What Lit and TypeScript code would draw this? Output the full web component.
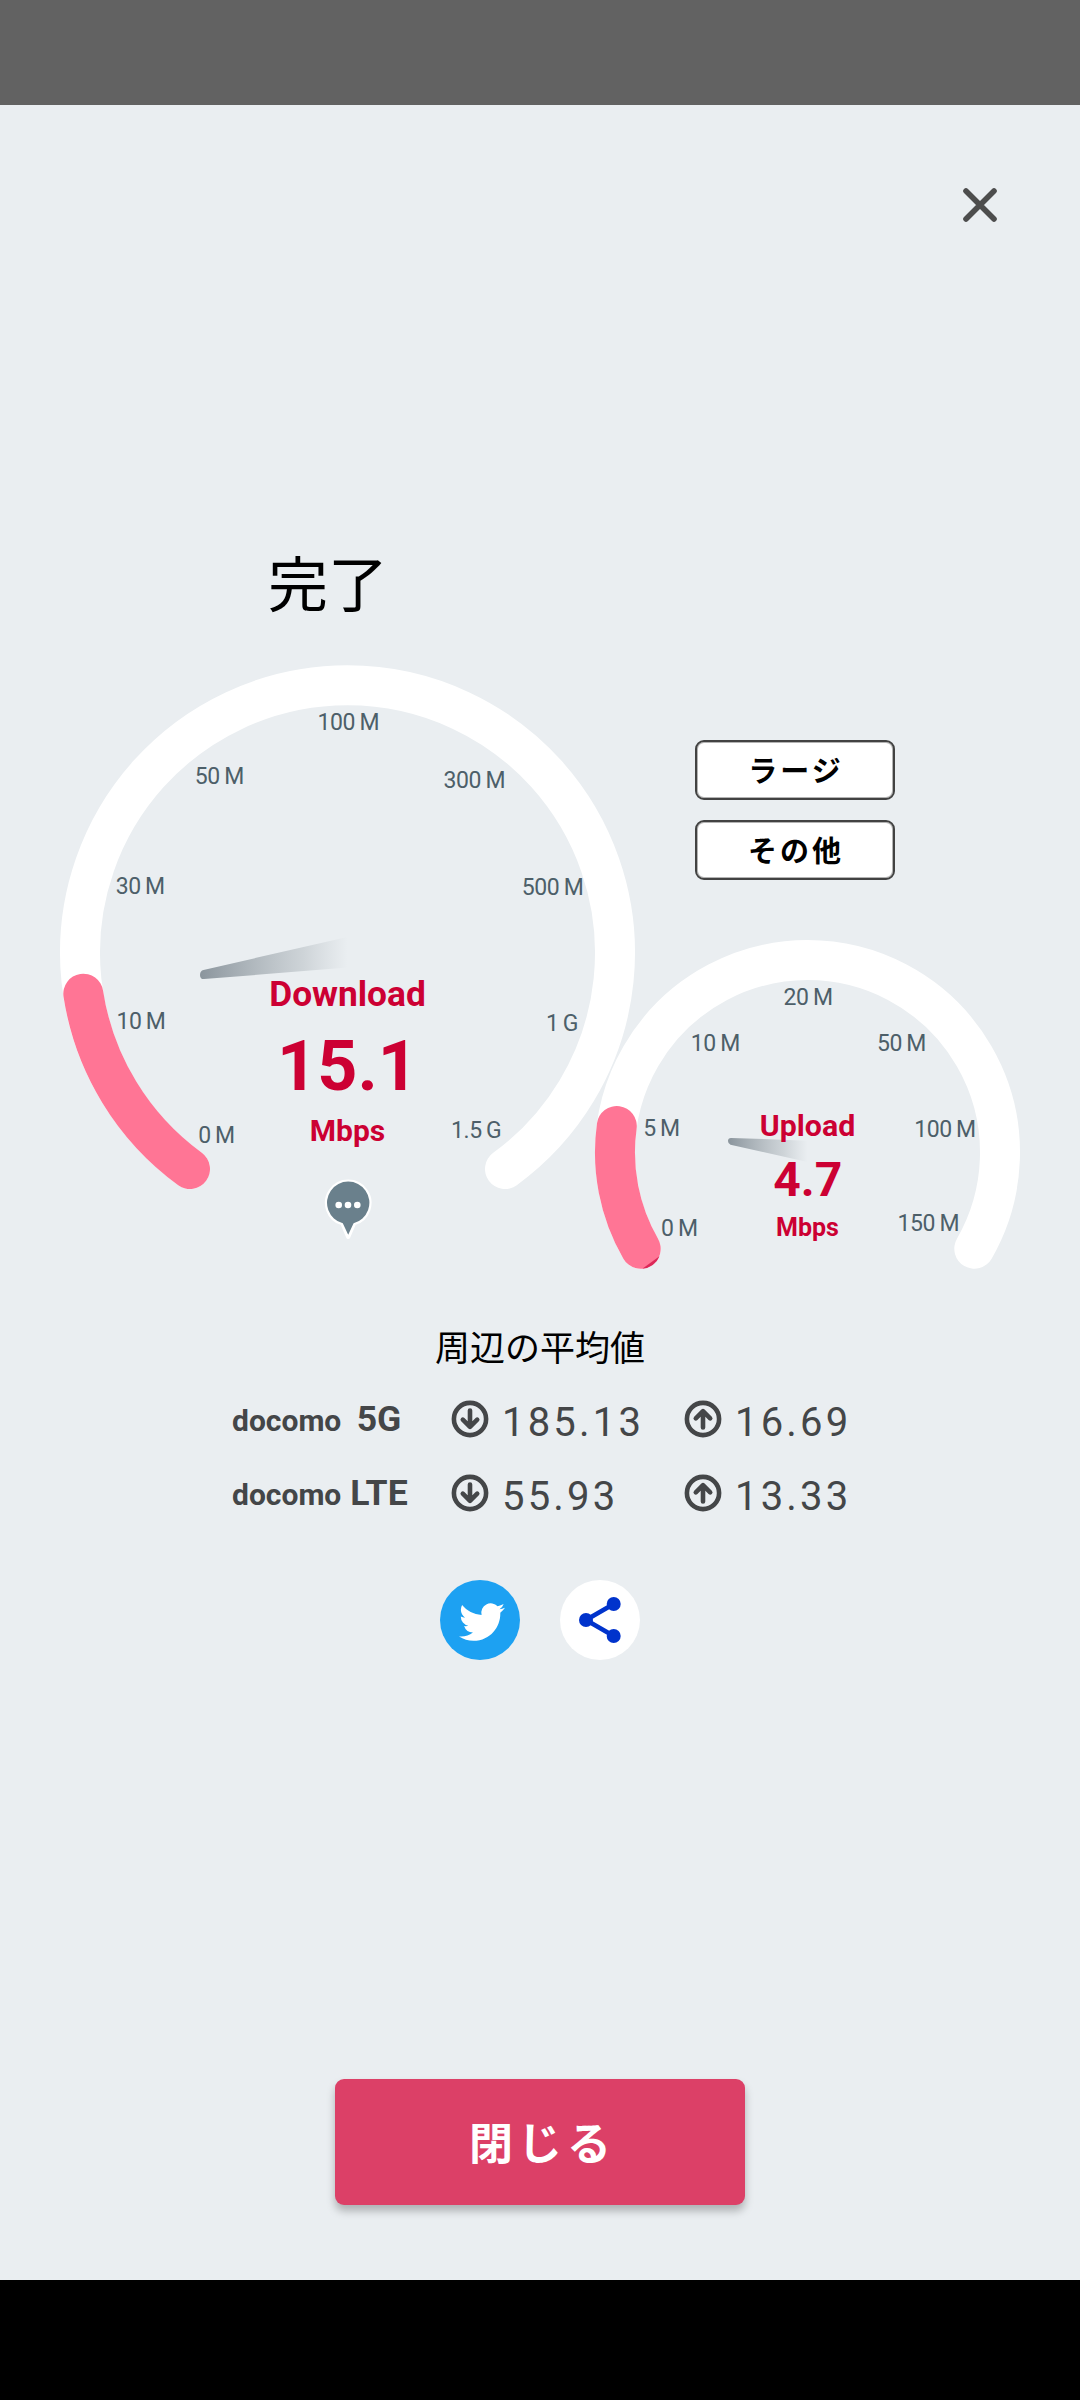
import { LitElement, html, svg, css } from "lit";
import { customElement, property } from "lit/decorators.js";

interface Tick {
  text: string;
  x: number;
  y: number;
}

interface Caption {
  text: string;
  x: number;
  y: number;
  size: number;
}

interface Dial {
  width: number;
  height: number;
  radius: number;
  start: [number, number];
  value: [number, number];
  needle: string;
  needleLength: number;
  ticks: Tick[];
  captions: Caption[];
  restMark?: string;
}

const DOWNLOAD: Dial = {
  width: 575,
  height: 580,
  radius: 267.5,
  start: [-157.5, 216.5],
  value: [-264.2, 41.2],
  needle: "M-144 17.4 L0 -15.5 V15 L-143.5 26.6 Q-147.5 26.6 -147.5 22.4 Q-147.5 18.2 -144 17.4Z",
  needleLength: 147,
  ticks: [
    { text: "0 M", x: -131, y: 190.2 },
    { text: "10 M", x: -206.5, y: 76.5 },
    { text: "30 M", x: -207.3, y: -58.5 },
    { text: "50 M", x: -128.2, y: -168.5 },
    { text: "100 M", x: 0.8, y: -222.5 },
    { text: "300 M", x: 126.8, y: -164.8 },
    { text: "500 M", x: 205.1, y: -57.5 },
    { text: "1 G", x: 214.6, y: 78.2 },
    { text: "1.5 G", x: 128.7, y: 185.5 },
  ],
  captions: [
    { text: "Download", x: 0, y: 53.5, size: 35.3 },
    { text: "15.1", x: 0, y: 137.5, size: 70 },
    { text: "Mbps", x: 0, y: 188.5, size: 30 },
  ],
};

const UPLOAD: Dial = {
  width: 425,
  height: 340,
  radius: 192.5,
  start: [-166.8, 96.2],
  value: [-190.7, -26.5],
  needle: "M-76.5 -14.6 L0 -11.8 V9.6 L-77 -7.8 Q-79.5 -8.6 -79.5 -11.4 Q-79.5 -14.6 -76.5 -14.6Z",
  needleLength: 79,
  ticks: [
    { text: "0 M", x: -128.2, y: 83.5 },
    { text: "5 M", x: -146, y: -16.5 },
    { text: "10 M", x: -92.2, y: -101.5 },
    { text: "20 M", x: 0.6, y: -147.5 },
    { text: "50 M", x: 94, y: -101.5 },
    { text: "100 M", x: 137.5, y: -15.5 },
    { text: "150 M", x: 120.8, y: 78.5 },
  ],
  captions: [
    { text: "Upload", x: 0, y: -16.5, size: 30.3 },
    { text: "4.7", x: 0.3, y: 43.5, size: 48 },
    { text: "Mbps", x: 0, y: 83.5, size: 25 },
  ],
  restMark: "M-165.2 116.3 A20 20 0 0 0 -148 103.8Z",
};

@customElement("speed-dial")
export class SpeedDial extends LitElement {
  @property({ attribute: false }) dial!: Dial;

  static styles = css`
    :host {
      display: block;
    }
    svg {
      display: block;
      overflow: visible;
    }
    .track,
    .value {
      fill: none;
      stroke-width: 40;
      stroke-linecap: round;
    }
    .track {
      stroke: #ffffff;
    }
    .value {
      stroke: #ff7595;
    }
    .rest {
      fill: #dc2858;
    }
    .tick {
      font-size: 23px;
      letter-spacing: -0.4px;
      word-spacing: -1px;
      fill: #4d5f69;
      text-anchor: middle;
    }
    .caption {
      font-weight: 700;
      fill: #cc0033;
      text-anchor: middle;
    }
  `;

  render() {
    const d = this.dial;
    const half = d.width / 2;
    const [sx, sy] = d.start;
    const [vx, vy] = d.value;
    const arc = `A${d.radius} ${d.radius} 0`;
    return html`
      <svg
        width=${d.width}
        height=${d.height}
        viewBox="${-half} ${-half} ${d.width} ${d.height}"
      >
        <defs>
          <linearGradient
            id="fade"
            gradientUnits="userSpaceOnUse"
            x1=${-d.needleLength}
            y1="0"
            x2="0"
            y2="0"
          >
            <stop offset="0" stop-color="#8b959d" />
            <stop offset="0.7" stop-color="#a0a9af" stop-opacity="0.38" />
            <stop offset="1" stop-color="#a8b1b6" stop-opacity="0" />
          </linearGradient>
        </defs>
        <path class="track" d="M${sx} ${sy} ${arc} 1 1 ${-sx} ${sy}" />
        <path class="value" d="M${sx} ${sy} ${arc} 0 1 ${vx} ${vy}" />
        ${d.restMark ? svg`<path class="rest" d=${d.restMark} />` : null}
        <path d=${d.needle} fill="url(#fade)" />
        ${d.ticks.map(
          (t) => svg`<text class="tick" x=${t.x} y=${t.y}>${t.text}</text>`
        )}
        ${d.captions.map(
          (c) =>
            svg`<text class="caption" x=${c.x} y=${c.y} font-size=${c.size}>${c.text}</text>`
        )}
      </svg>
    `;
  }
}

const arrowIcon = (up: boolean) => html`
  <svg class="arrow" width="38" height="38" viewBox="-19 -19 38 38">
    <circle r="16.1" />
    <path d=${up ? "M0 8.4 V-7.6 M-7.2 -0.6 L0 -7.8 L7.2 -0.6" : "M0 -8.4 V7.6 M-7.2 0.6 L0 7.8 L7.2 0.6"} />
  </svg>
`;

const AVERAGES = [
  { carrier: "docomo", network: "5G", down: "185.13", up: "16.69" },
  { carrier: "docomo", network: "LTE", down: "55.93", up: "13.33" },
];

@customElement("app-root")
export class AppRoot extends LitElement {
  static styles = css`
    :host {
      display: flex;
      flex-direction: column;
      width: 1080px;
      height: 2400px;
      font-family: Roboto, "Noto Sans CJK JP", sans-serif;
      background: #eaeef1;
      color: #000;
    }
    svg {
      display: block;
    }
    .status {
      flex: none;
      height: 105px;
      background: #626262;
    }
    .navbar {
      flex: none;
      height: 120px;
      background: #000;
    }
    .panel {
      flex: 1;
      display: flex;
      flex-direction: column;
    }
    .header {
      display: flex;
      justify-content: flex-end;
      padding: 84px 84px 0 0;
    }
    .cross {
      overflow: visible;
      stroke: #4d4d4d;
      stroke-width: 5.6;
      stroke-linecap: round;
    }
    .title {
      margin: 331px 0 0 268px;
      font-size: 60px;
      line-height: 70px;
      font-weight: 400;
    }
    .dials {
      display: flex;
      align-items: flex-start;
      height: 615px;
      margin-top: 43px;
      padding-left: 60px;
    }
    .download {
      display: flex;
      flex-direction: column;
      align-items: center;
    }
    .download speed-dial {
      height: 512px;
    }
    .side {
      display: flex;
      flex-direction: column;
      align-items: center;
      margin-left: -40px;
      padding-top: 75px;
    }
    .tags {
      display: flex;
      flex-direction: column;
      gap: 20px;
      margin: 0 25px 60px 0;
      align-self: center;
    }
    .tag {
      box-sizing: border-box;
      width: 200px;
      height: 60px;
      border: 2px solid #424242;
      border-radius: 9px;
      box-shadow: inset 0 0 0 1px rgba(66, 66, 66, 0.4);
      background: #fff;
      font-size: 29px;
      line-height: 60px;
      font-weight: 700;
      letter-spacing: 3px;
      text-indent: 2px;
      text-align: center;
    }
    .subtitle {
      margin: 45px 0 0;
      font-size: 35px;
      line-height: 50px;
      font-weight: 400;
      text-align: center;
    }
    .averages {
      margin-top: 7px;
      padding-left: 232px;
      color: #444648;
    }
    .row {
      display: grid;
      grid-template-columns: 219px 51px 182px 51px auto;
      align-items: center;
      height: 74px;
    }
    .name {
      display: flex;
      align-items: baseline;
      padding-top: 2px;
      font-weight: 700;
      line-height: 48px;
    }
    .carrier {
      width: 114px;
      font-size: 30px;
    }
    .network {
      width: 66px;
      font-size: 35.6px;
      text-align: center;
    }
    .figure {
      font-size: 40px;
      line-height: 48px;
      letter-spacing: 3.2px;
      padding-top: 7px;
    }
    .arrow {
      fill: none;
      stroke: #444648;
      stroke-width: 4.6;
      stroke-linecap: round;
      stroke-linejoin: round;
    }
    .share {
      display: flex;
      justify-content: center;
      gap: 40px;
      margin-top: 50px;
    }
    .round {
      display: flex;
      align-items: center;
      justify-content: center;
      width: 80px;
      height: 80px;
      border-radius: 50%;
      background: #fff;
    }
    .twitter {
      box-sizing: border-box;
      padding: 3px 0 0 3px;
      background: #1da1f2;
    }
    .close {
      align-self: center;
      width: 410px;
      height: 126px;
      margin-top: 419px;
      padding: 7px 0 0;
      border: 0;
      border-radius: 9px;
      background: #dc4067;
      box-shadow: 0 6px 8px rgba(0, 0, 0, 0.26);
      color: #fff;
      font-family: inherit;
      font-size: 44px;
      font-weight: 700;
      letter-spacing: 5px;
      text-indent: 5px;
      line-height: 119px;
    }
  `;

  render() {
    return html`
      <div class="status"></div>
      <main class="panel">
        <div class="header">
          <svg class="cross" width="32" height="32" viewBox="-16 -16 32 32">
            <path d="M-14 -14 L14 14 M14 -14 L-14 14" />
          </svg>
        </div>
        <h1 class="title">完了</h1>
        <section class="dials">
          <div class="download">
            <speed-dial .dial=${DOWNLOAD}></speed-dial>
            <svg width="50" height="64" viewBox="-25 -26 50 64">
              <path
                d="M-5.6 20.3 L0.2 33.8 L6 20.3 A21.2 21.2 0 1 0 -5.6 20.3Z"
                fill="#fff"
                stroke="#fff"
                stroke-width="4.2"
                stroke-linejoin="round"
              />
              <path
                d="M-5.2 20.3 L0.2 31.8 L5.6 20.3 A21.2 21.2 0 1 0 -5.2 20.3Z"
                fill="#6a808c"
              />
              <g fill="#fff">
                <circle cx="-9.3" cy="2" r="3.3" />
                <circle cx="0" cy="2" r="3.3" />
                <circle cx="9.3" cy="2" r="3.3" />
              </g>
            </svg>
          </div>
          <div class="side">
            <div class="tags">
              <div class="tag">ラージ</div>
              <div class="tag">その他</div>
            </div>
            <speed-dial .dial=${UPLOAD}></speed-dial>
          </div>
        </section>
        <h2 class="subtitle">周辺の平均値</h2>
        <section class="averages">
          ${AVERAGES.map(
            (a) => html`
              <div class="row">
                <div class="name">
                  <span class="carrier">${a.carrier}</span>
                  <span class="network">${a.network}</span>
                </div>
                ${arrowIcon(false)}
                <span class="figure">${a.down}</span>
                ${arrowIcon(true)}
                <span class="figure">${a.up}</span>
              </div>
            `
          )}
        </section>
        <section class="share">
          <div class="round twitter">
            <svg width="46" height="46" viewBox="0 0 24 24">
              <path
                fill="#fff"
                d="M23.953 4.57a10 10 0 01-2.825.775 4.958 4.958 0 002.163-2.723c-.951.555-2.005.959-3.127 1.184a4.92 4.92 0 00-8.384 4.482C7.69 8.095 4.067 6.13 1.64 3.162a4.822 4.822 0 00-.666 2.475c0 1.71.87 3.213 2.188 4.096a4.904 4.904 0 01-2.228-.616v.06a4.923 4.923 0 003.946 4.827 4.996 4.996 0 01-2.212.085 4.936 4.936 0 004.604 3.417 9.867 9.867 0 01-6.102 2.105c-.39 0-.779-.023-1.17-.067a13.995 13.995 0 007.557 2.209c9.053 0 13.998-7.496 13.998-13.985 0-.21 0-.42-.015-.63A9.935 9.935 0 0024 4.59z"
              />
            </svg>
          </div>
          <div class="round">
            <svg width="48" height="48" viewBox="-24 -24 48 48">
              <path
                d="M13.7 -16 L-14 0 L13.7 16"
                fill="none"
                stroke="#0033cc"
                stroke-width="4.6"
              />
              <g fill="#0033cc">
                <circle cx="-14" cy="0" r="7" />
                <circle cx="13.7" cy="-16" r="7" />
                <circle cx="13.7" cy="16" r="7" />
              </g>
            </svg>
          </div>
        </section>
        <button class="close">閉じる</button>
      </main>
      <div class="navbar"></div>
    `;
  }
}
